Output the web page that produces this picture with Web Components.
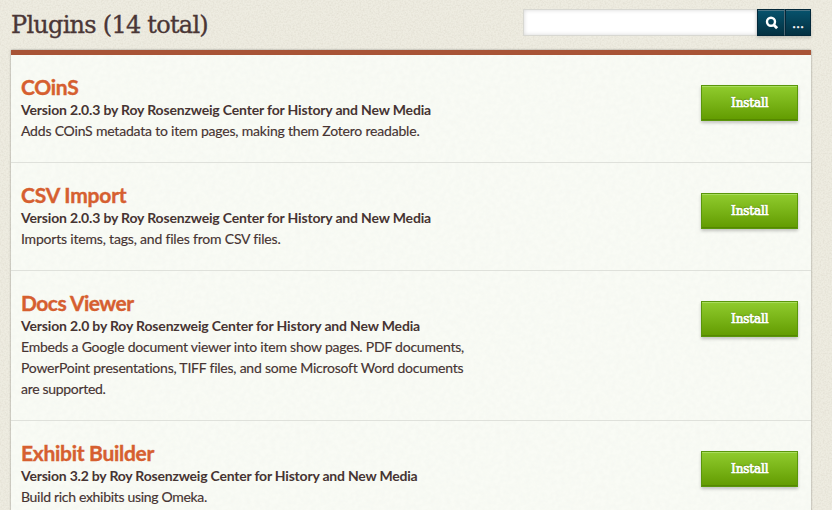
<!DOCTYPE html>
<html lang="en">
<head>
<meta charset="utf-8">
<title>Plugins</title>
<style>
html, body { margin: 0; height: 510px; overflow: hidden; }
</style>
</head>
<body>
<plugins-page></plugins-page>
<script>
const grain = (freq, r, g, b, slope, offset, size) =>
  `url("data:image/svg+xml,${encodeURIComponent(`<svg xmlns="http://www.w3.org/2000/svg" width="${size}" height="${size}"><filter id="n" x="0" y="0" width="100%" height="100%"><feTurbulence type="fractalNoise" baseFrequency="${freq}" numOctaves="2" stitchTiles="stitch"/><feColorMatrix values="0 0 0 0 ${r} 0 0 0 0 ${g} 0 0 0 0 ${b} ${slope} 0 0 0 ${offset}"/></filter><rect width="100%" height="100%" filter="url(#n)"/></svg>`)}")`;

class Base extends HTMLElement {
  constructor() {
    super();
    this.attachShadow({ mode: 'open' }).innerHTML = this.constructor.markup;
  }
}

/* One line of text whose letter spacing is tuned to a given width. */
class TextLine extends Base {
  static markup = `<style>:host{display:block;white-space:nowrap}span{display:inline-block}</style><span></span>`;
  connectedCallback() {
    const span = this.shadowRoot.querySelector('span');
    span.textContent = this.getAttribute('text');
    const width = span.getBoundingClientRect().width;
    const target = Number(this.getAttribute('width'));
    if (target) span.style.letterSpacing = ((target - width) / span.textContent.length) + 'px';
  }
}
customElements.define('text-line', TextLine);

class SearchBar extends Base {
  static markup = `<style>
    :host{display:flex;width:288px;height:27px;box-sizing:border-box}
    .field{flex:1;box-sizing:border-box;border:1px solid #d8d8d2;border-right:0;background:#fff;box-shadow:inset 0 0 4px #d5d5d5}
    .btn{box-sizing:border-box;height:27px;width:27px;border:1px solid #03283a;background:linear-gradient(#07536d,#033041);
      box-shadow:inset 0 1px 0 #4a7586,0 2px 3px rgba(0,0,0,.17);display:flex;align-items:center;justify-content:center;color:#fff}
    .go{width:28px;border-right-color:#536f7c}
    .more{width:26px;border-left-color:#03283a;font:13px/22px "DejaVu Serif",serif;-webkit-text-stroke:.4px #fff;padding-top:2px}
    svg{display:block;margin-left:2px}
  </style>
  <div class="field"></div>
  <div class="btn go"><svg width="14" height="14" viewBox="0 0 14 14" fill="none" stroke="#fff"><circle cx="6" cy="5.8" r="4" stroke-width="2.4"/><path d="M8.7 8.7l3.4 3.6" stroke-width="2.8"/></svg></div>
  <div class="btn more"><text-line text="..." width="12"></text-line></div>`;
}
customElements.define('search-bar', SearchBar);

class InstallButton extends Base {
  static markup = `<style>
    :host{display:block;flex:none;box-sizing:border-box;width:97px;height:36px;border:1px solid #5a960b;
      background:linear-gradient(#90cc2e,#629b00);box-shadow:inset 0 1px 0 #a8dc5c,inset 0 -1px 0 #568800,0 2px 3px rgba(0,0,0,.22);
      color:#fff;font:12px/35px "DejaVu Serif",serif;-webkit-text-stroke:.7px #fff;text-shadow:0 -1px 1px #4c7c00;padding-left:29px}
  </style><text-line text="Install" width="37.5"></text-line>`;
}
customElements.define('install-button', InstallButton);

class PluginRow extends Base {
  static markup = `<style>
    :host{display:flex;justify-content:space-between;align-items:flex-start;box-sizing:border-box;padding:21px 13px 21px 10px;border-bottom:1px solid #dfe1db}
    .text{color:#463432;font:14px/21px Lato,sans-serif}
    slot{-webkit-text-stroke:.15px #463432}
    .name{font:bold 21px/21px Lato,sans-serif;padding-bottom:2px;color:#d65f30;-webkit-text-stroke:.4px #d65f30}
    .by{font-weight:bold}
    install-button{margin-top:9px}
  </style>
  <div class="text"><div class="name"></div><div class="by"></div><slot></slot></div>
  <install-button></install-button>`;
  connectedCallback() {
    const put = (cls, text, width) => {
      const line = document.createElement('text-line');
      line.setAttribute('text', text);
      line.setAttribute('width', width);
      this.shadowRoot.querySelector(cls).append(line);
    };
    put('.name', this.getAttribute('name'), this.getAttribute('name-width'));
    put('.by', `Version ${this.getAttribute('version')} by Roy Rosenzweig Center for History and New Media`, this.getAttribute('by-width'));
  }
}
customElements.define('plugin-row', PluginRow);

class PluginsPage extends Base {
  static markup = `<style>
    :host{display:block;box-sizing:border-box;height:510px;overflow:hidden;padding:0 21px 0 11px;
      background:${grain(0.6, .6, .57, .48, .6, -.22, 200)} #eeece1}
    header{display:flex;justify-content:space-between;height:50px;box-sizing:border-box;padding-top:9px}
    h1{margin:0;padding-top:1px;font:24px/30px "DejaVu Serif",serif;color:#4a3636;-webkit-text-stroke:.35px #4a3636}
    main{box-sizing:border-box;height:560px;border-top:5px solid #a85436;background:${grain(0.2, .7, .75, .65, .2, -.06, 200)} #f9fbf5;
      background-clip:padding-box;box-shadow:0 0 2px rgba(0,0,0,.4)}
  </style>
  <header><h1><text-line text="Plugins (14 total)" width="197"></text-line></h1><search-bar></search-bar></header>
  <main>
    <plugin-row name="COinS" name-width="57.5" version="2.0.3" by-width="410">
      <text-line text="Adds COinS metadata to item pages, making them Zotero readable." width="398.5"></text-line>
    </plugin-row>
    <plugin-row name="CSV Import" name-width="105.5" version="2.0.3" by-width="410">
      <text-line text="Imports items, tags, and files from CSV files." width="259"></text-line>
    </plugin-row>
    <plugin-row name="Docs Viewer" name-width="112.5" version="2.0" by-width="399">
      <text-line text="Embeds a Google document viewer into item show pages. PDF documents," width="443"></text-line>
      <text-line text="PowerPoint presentations, TIFF files, and some Microsoft Word documents" width="442"></text-line>
      <text-line text="are supported." width="84.5"></text-line>
    </plugin-row>
    <plugin-row name="Exhibit Builder" name-width="133" version="3.2" by-width="396.5">
      <text-line text="Build rich exhibits using Omeka." width="186"></text-line>
    </plugin-row>
  </main>`;
}
customElements.define('plugins-page', PluginsPage);
</script>
</body>
</html>
